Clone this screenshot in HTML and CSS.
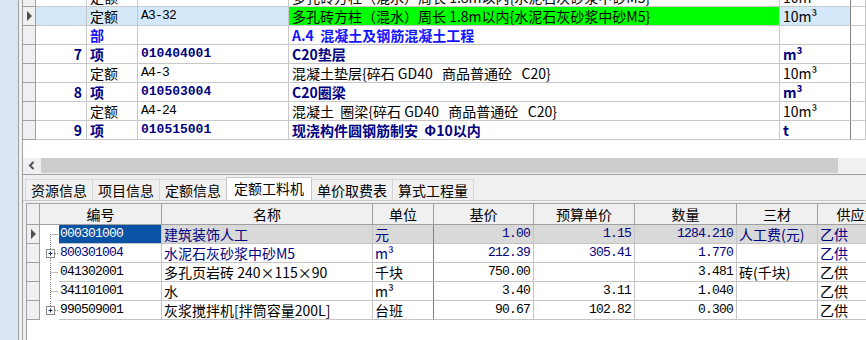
FILE: index.html
```html
<!DOCTYPE html>
<html lang="zh-CN">
<head>
  <meta charset="UTF-8" />
  <title>定额工料机</title>
  <link rel="stylesheet" href="styles.css">
</head>
<body>
  <div class="side"></div>
  <div class="gutter"></div>

  <div class="main">
    <div class="top">
      <div class="sheet">
        <div class="trow">
          <div class="hd"></div>
          <div class="seq"></div>
          <div>定额</div>
          <div class="mono">A3-31</div>
          <div>多孔砖方柱（混水）周长 1.8m以内{水泥石灰砂浆中砂M5}</div>
          <div class="unit">10m³</div>
          <div class="extra"></div>
        </div>
        <div class="trow sel">
          <div class="hd"><span class="mark"></span></div>
          <div class="seq"></div>
          <div>定额</div>
          <div class="mono">A3-32</div>
          <div class="green">多孔砖方柱（混水）周长 1.8m以内{水泥石灰砂浆中砂M5}</div>
          <div class="unit">10m³</div>
          <div class="extra"></div>
        </div>
        <div class="trow part">
          <div class="hd"></div>
          <div class="seq"></div>
          <div>部</div>
          <div></div>
          <div>A.4&nbsp;&nbsp;混凝土及钢筋混凝土工程</div>
          <div class="unit"></div>
          <div class="extra"></div>
        </div>
        <div class="trow item">
          <div class="hd"></div>
          <div class="seq">7</div>
          <div>项</div>
          <div class="mono">010404001</div>
          <div>C20垫层</div>
          <div class="unit">m³</div>
          <div class="extra"></div>
        </div>
        <div class="trow">
          <div class="hd"></div>
          <div class="seq"></div>
          <div>定额</div>
          <div class="mono">A4-3</div>
          <div>混凝土垫层{碎石 GD40&nbsp;&nbsp;&nbsp;商品普通砼&nbsp;&nbsp;&nbsp;C20}</div>
          <div class="unit">10m³</div>
          <div class="extra"></div>
        </div>
        <div class="trow item">
          <div class="hd"></div>
          <div class="seq">8</div>
          <div>项</div>
          <div class="mono">010503004</div>
          <div>C20圈梁</div>
          <div class="unit">m³</div>
          <div class="extra"></div>
        </div>
        <div class="trow">
          <div class="hd"></div>
          <div class="seq"></div>
          <div>定额</div>
          <div class="mono">A4-24</div>
          <div>混凝土&nbsp;&nbsp;圈梁{碎石 GD40&nbsp;&nbsp;&nbsp;商品普通砼&nbsp;&nbsp;&nbsp;C20}</div>
          <div class="unit">10m³</div>
          <div class="extra"></div>
        </div>
        <div class="trow item">
          <div class="hd"></div>
          <div class="seq">9</div>
          <div>项</div>
          <div class="mono">010515001</div>
          <div>现浇构件圆钢筋制安&nbsp;&nbsp;Φ10以内</div>
          <div class="unit">t</div>
          <div class="extra"></div>
        </div>
      </div>
    </div>

    <div class="hscroll">
      <div class="arrow">
        <svg width="18" height="15" viewBox="0 0 18 15"><path d="M10.5 4 L7 7.5 L10.5 11" fill="none" stroke="#505050" stroke-width="2"/></svg>
      </div>
      <div class="thumb"></div>
    </div>

    <div class="tabs">
      <div class="tab">资源信息</div>
      <div class="tab">项目信息</div>
      <div class="tab">定额信息</div>
      <div class="tab active">定额工料机</div>
      <div class="tab">单价取费表</div>
      <div class="tab">算式工程量</div>
    </div>

    <div class="page">
      <div class="bhead">
        <div class="hd"></div>
        <div>编号</div>
        <div>名称</div>
        <div>单位</div>
        <div>基价</div>
        <div>预算单价</div>
        <div>数量</div>
        <div>三材</div>
        <div>供应方</div>
      </div>

      <div class="brow cur">
        <div class="hd"><span class="mark"></span></div>
        <div class="tree"><svg width="18" height="18"><path d="M10.5 9 V18 M10.5 9.5 H18" stroke="#808080" stroke-dasharray="1 1"/></svg></div>
        <div class="mono code">000301000</div>
        <div>建筑装饰人工</div>
        <div class="unit">元</div>
        <div class="mono r">1.00</div>
        <div class="mono r">1.15</div>
        <div class="mono r">1284.210</div>
        <div>人工费(元)</div>
        <div>乙供</div>
      </div>
      <div class="brow navy">
        <div class="hd"></div>
        <div class="tree"><svg width="18" height="18"><path d="M10.5 0 V5 M10.5 14 V18 M15 9.5 H18" stroke="#808080" stroke-dasharray="1 1"/><rect x="6.5" y="5.5" width="8" height="8" fill="#fff" stroke="#8a8a8a"/><path d="M8.5 9.5 H12.5 M10.5 7.5 V11.5" stroke="#203060"/></svg></div>
        <div class="mono">800301004</div>
        <div>水泥石灰砂浆中砂M5</div>
        <div class="unit">m³</div>
        <div class="mono r">212.39</div>
        <div class="mono r">305.41</div>
        <div class="mono r">1.770</div>
        <div></div>
        <div>乙供</div>
      </div>
      <div class="brow">
        <div class="hd"></div>
        <div class="tree"><svg width="18" height="18"><path d="M10.5 0 V18 M10.5 9.5 H18" stroke="#808080" stroke-dasharray="1 1"/></svg></div>
        <div class="mono">041302001</div>
        <div>多孔页岩砖 240×115×90</div>
        <div class="unit">千块</div>
        <div class="mono r">750.00</div>
        <div></div>
        <div class="mono r">3.481</div>
        <div>砖(千块)</div>
        <div>乙供</div>
      </div>
      <div class="brow">
        <div class="hd"></div>
        <div class="tree"><svg width="18" height="18"><path d="M10.5 0 V18 M10.5 9.5 H18" stroke="#808080" stroke-dasharray="1 1"/></svg></div>
        <div class="mono">341101001</div>
        <div>水</div>
        <div class="unit">m³</div>
        <div class="mono r">3.40</div>
        <div class="mono r">3.11</div>
        <div class="mono r">1.040</div>
        <div></div>
        <div>乙供</div>
      </div>
      <div class="brow">
        <div class="hd"></div>
        <div class="tree"><svg width="18" height="18"><path d="M10.5 0 V5 M15 9.5 H18" stroke="#808080" stroke-dasharray="1 1"/><rect x="6.5" y="5.5" width="8" height="8" fill="#fff" stroke="#8a8a8a"/><path d="M8.5 9.5 H12.5 M10.5 7.5 V11.5" stroke="#203060"/></svg></div>
        <div class="mono">990509001</div>
        <div>灰浆搅拌机[拌筒容量200L]</div>
        <div class="unit">台班</div>
        <div class="mono r">90.67</div>
        <div class="mono r">102.82</div>
        <div class="mono r">0.300</div>
        <div></div>
        <div>乙供</div>
      </div>
    </div>
  </div>
</body>
</html>
```

FILE: styles.css
```css
html, body {
  margin: 0;
  height: 340px;
  overflow: hidden;
}
body {
  display: flex;
  width: 866px;
  font-family: "Noto Sans CJK SC", sans-serif;
  font-size: 14px;
  color: #000;
  background: #f0f0f0;
}
.side {
  width: 18px;
  background: #dae6f4;
  border-right: 1px solid #a0a0a0;
}
.gutter {
  width: 3px;
  background: #f0f0f0;
  border-right: 1px solid #a0a0a0;
}
.main {
  flex: 1;
  display: flex;
  flex-direction: column;
  min-width: 0;
}
.mono {
  font-family: "Liberation Mono", "Noto Sans CJK SC", monospace;
  font-size: 13px;
  letter-spacing: -0.8px;
}

/* upper grid */
.top {
  height: 158px;
  background: #fff;
  overflow: hidden;
}
.sheet {
  margin-top: -12px;
}
.trow {
  display: grid;
  grid-template-columns: 13px 51px 51px 151px 491px 71px 1fr;
  height: 19px;
}
.trow > div {
  box-sizing: border-box;
  border-right: 1px solid #c8c8c8;
  border-bottom: 1px solid #c8c8c8;
  padding: 0 3px;
  line-height: 18px;
  white-space: nowrap;
  overflow: hidden;
}
.trow > .hd {
  background: #f0f0f0;
  border-color: #a0a0a0;
  padding: 0;
}
.trow > .seq {
  text-align: right;
  padding-right: 4px;
}
.trow > .unit {
  border-right-color: #808080;
}
.trow.sel > div {
  background: #d5e8f9;
}
.trow.sel > .hd {
  background: #f0f0f0;
}
.trow.sel > .extra {
  background: #fff;
}
.trow.sel > .green {
  background: #00ff00;
}
.trow.part {
  color: #1414ff;
  font-weight: bold;
}
.trow.item {
  color: #000080;
  font-weight: bold;
}
.trow.item .mono {
  letter-spacing: 0;
}
.mark {
  display: block;
  width: 0;
  height: 0;
  margin: 4px 0 0 4px;
  border-left: 5px solid #505050;
  border-top: 5px solid transparent;
  border-bottom: 5px solid transparent;
}

/* scroll bar */
.hscroll {
  display: flex;
  height: 15px;
  padding-bottom: 1px;
  border-bottom: 1px solid #a0a0a0;
}
.arrow {
  width: 18px;
  height: 15px;
}
.arrow svg {
  display: block;
}
.thumb {
  width: 797px;
  height: 15px;
  background: #cdcdcd;
}

/* tabs */
.tabs {
  display: flex;
  align-items: flex-end;
  height: 25px;
  padding-left: 2px;
  border-bottom: 1px solid #c8c8c8;
}
.tab {
  height: 20px;
  line-height: 20px;
  padding: 0 5px;
  border: 1px solid #d6d6d6;
  border-bottom: none;
  margin-right: -1px;
  white-space: nowrap;
}
.tab.active {
  height: 22px;
  padding: 0 7px;
  background: #fff;
  border-color: #c8c8c8;
  position: relative;
}

/* lower grid */
.page {
  flex: 1;
  margin: 2px 0 0 3px;
  background: #fff;
  border-left: 1px solid #a0a0a0;
  border-top: 1px solid #a0a0a0;
  overflow: hidden;
}
.bhead, .brow {
  display: grid;
  grid-template-columns: 13px 122px 211px 61px 100px 101px 102px 81px 80px;
}
.brow {
  grid-template-columns: 13px 19px 103px 211px 61px 100px 101px 102px 81px 80px;
  height: 19px;
}
.bhead {
  height: 21px;
  background: #f0f0f0;
}
.bhead > div {
  box-sizing: border-box;
  border-right: 1px solid #a0a0a0;
  border-bottom: 1px solid #a0a0a0;
  text-align: center;
  line-height: 20px;
  white-space: nowrap;
  overflow: hidden;
}
.brow > div {
  box-sizing: border-box;
  border-right: 1px solid #c4c4c4;
  border-bottom: 1px solid #c4c4c4;
  padding: 0 2px;
  line-height: 18px;
  white-space: nowrap;
  overflow: hidden;
}
.brow > .hd {
  background: #f0f0f0;
  border-color: #a0a0a0;
  padding: 0;
}
.brow > .tree {
  padding: 0;
  border-right: none;
  border-bottom: none;
}
.brow > .tree svg {
  display: block;
}
.brow > .mono {
  padding-left: 1px;
}
.brow > .r {
  text-align: right;
  padding-right: 3px;
}
.brow > .unit {
  border-right-color: #808080;
}
.brow.cur {
  color: #000080;
}
.brow.cur > div {
  background: #d9d9d9;
}
.brow.cur > .hd {
  background: #f0f0f0;
}
.brow.cur > .tree {
  background: #fff;
}
.brow.cur > .code {
  background: #0a52a4;
  color: #fff;
}
.brow.navy {
  color: #000080;
}
```
